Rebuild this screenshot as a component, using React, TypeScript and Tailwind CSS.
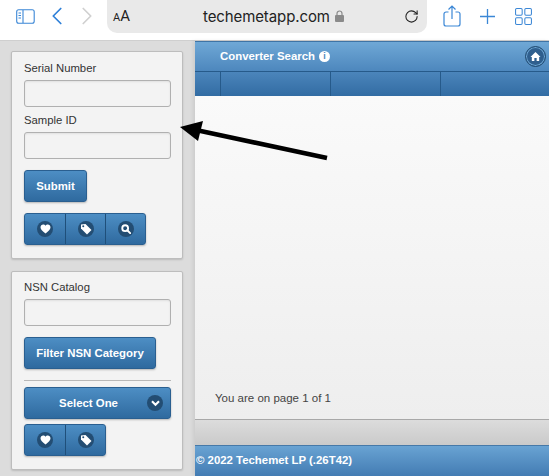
import { ChevronLeft, ChevronRight, RotateCw } from 'lucide-react'

const FONT = "font-['Liberation_Sans',Arial,sans-serif]"
const BTN = 'bg-gradient-to-b from-[#4d8ec4] to-[#2f6a9f] border border-[#2a5f90] text-white font-bold text-[11.4px] rounded-[3px] shadow-[0_1px_2px_rgba(0,0,0,0.25)]'

function Dot({ children }: { children: React.ReactNode }) {
  return (
    <span className="w-[16px] h-[16px] rounded-full bg-[#234d73] flex items-center justify-center">
      {children}
    </span>
  )
}

function Heart() {
  return (
    <svg width="11" height="10" viewBox="0 0 24 22" fill="white">
      <path d="M12 21 C5 15 1 11.500 1 7 C1 3.500 3.700 1 7 1 C9 1 11 2 12 4 C13 2 15 1 17 1 C20.300 1 23 3.500 23 7 C23 11.500 19 15 12 21Z" />
    </svg>
  )
}

function Tag() {
  return (
    <svg width="12" height="12" viewBox="0 0 24 24" fill="white">
      <path d="M2 3 L11 2 L23 14 L14 23 L2 11Z" />
      <circle cx="6.500" cy="6.500" r="2" fill="#234d73" />
    </svg>
  )
}

function Search() {
  return (
    <svg width="10" height="10" viewBox="0 0 24 24" fill="none" stroke="white" strokeWidth="4.500">
      <circle cx="10" cy="10" r="7" />
      <path d="M15 15 L22 22" strokeLinecap="round" />
    </svg>
  )
}

function IconGroup({ icons }: { icons: React.ReactNode[] }) {
  return (
    <div className={`${BTN} flex h-[32px] w-fit overflow-hidden`}>
      {icons.map((icon, i) => (
        <div
          key={i}
          className={`w-[40px] flex items-center justify-center ${i > 0 ? 'border-l border-[#1f4f7a]' : ''}`}
        >
          <Dot>{icon}</Dot>
        </div>
      ))}
    </div>
  )
}

function Field({ label }: { label: string }) {
  return (
    <div>
      <div className="text-[11.3px] leading-[15px] text-[#333] h-[19px]">{label}</div>
      <div className="h-[27px] bg-[#f3f3f3] border border-[#b0b0b0] rounded-[3px] shadow-[inset_0_1px_2px_rgba(0,0,0,0.08)]" />
    </div>
  )
}

export default function App() {
  return (
    <div className={`${FONT} relative w-[549px] h-[476px] overflow-hidden bg-[#dcdcdc] flex flex-col`}>
      {/* Safari toolbar */}
      <div className="h-[41px] pb-[8px] bg-white border-b border-[#cfcfcf] flex items-center shrink-0">
        <svg className="ml-4" width="19" height="15" viewBox="0 0 19 15" fill="none" stroke="#3b87d6" strokeWidth="1.100">
          <rect x="0.700" y="0.700" width="17.500" height="13.500" rx="2" />
          <path d="M7 1 V14" />
          <path d="M2.500 4 H5 M2.500 6.500 H5 M2.500 9 H5" strokeWidth="1" />
        </svg>
        <ChevronLeft size={30} strokeWidth={1.400} className="text-[#2f80d8] ml-[7px]" />
        <ChevronRight size={30} strokeWidth={1.400} className="text-[#d0d0d0]" />
        <div className="ml-[5px] w-[320px] h-[33px] rounded-b-[10px] bg-[#e9e9e9] flex items-center">
          <span className="ml-[6px] text-[#222] font-['Roboto',sans-serif]">
            <span className="text-[11px]">A</span>
            <span className="text-[15px]">A</span>
          </span>
          <span className="ml-[73px] text-[15px] text-[#222] font-['Inter',sans-serif] leading-none tracking-[-0.1px]">techemetapp.com</span>
          <svg className="ml-[5px]" width="9" height="12" viewBox="0 0 9 12">
            <path d="M2 5 V3.500 A2.500 2.500 0 0 1 7 3.500 V5" fill="none" stroke="#8a8a8a" strokeWidth="1.200" />
            <rect x="0" y="5" width="9" height="7" rx="1" fill="#8a8a8a" />
          </svg>
          <RotateCw size={15} strokeWidth={1.700} className="ml-auto mr-[8px] text-[#222]" />
        </div>
        <svg className="ml-[16px]" width="18" height="22" viewBox="0 0 18 22" fill="none" stroke="#3b87d6" strokeWidth="1.200">
          <path d="M5.500 7 H3 A2 2 0 0 0 1 9 V19 A2 2 0 0 0 3 21 H15 A2 2 0 0 0 17 19 V9 A2 2 0 0 0 15 7 H12.500" />
          <path d="M9 14 V1.500 M5.500 4.500 L9 1 L12.500 4.500" />
        </svg>
        <svg className="ml-[19px]" width="15" height="15" viewBox="0 0 15 15" stroke="#3b87d6" strokeWidth="1.300">
          <path d="M7.500 0 V15 M0 7.500 H15" />
        </svg>
        <svg className="ml-[20px]" width="17" height="17" viewBox="0 0 18 18" fill="none" stroke="#3b87d6" strokeWidth="1.100">
          <rect x="0.600" y="0.600" width="7" height="7" rx="1.200" />
          <rect x="10.400" y="0.600" width="7" height="7" rx="1.200" />
          <rect x="0.600" y="10.400" width="7" height="7" rx="1.200" />
          <rect x="10.400" y="10.400" width="7" height="7" rx="1.200" />
        </svg>
      </div>

      <div className="flex flex-1 min-h-0">
        {/* Sidebar */}
        <div className="w-[195px] shrink-0 bg-[#dcdcdc] pl-[11px] pr-[12px] pt-[10px] flex flex-col gap-3">
          <div className="h-[208px] bg-[#f3f3f3] border border-[#bdbdbd] rounded-[2px] shadow-[0_1px_2px_rgba(0,0,0,0.15)] pt-[9px] pl-3 pr-[11px]">
            <Field label="Serial Number" />
            <div className="mt-[6px]">
              <Field label="Sample ID" />
            </div>
            <button className={`${BTN} mt-[11px] w-[63px] h-[32px] pt-[2px] block`}>Submit</button>
            <div className="mt-[11px]">
              <IconGroup icons={[<Heart />, <Tag />, <Search />]} />
            </div>
          </div>
          <div className="h-[199px] bg-[#f3f3f3] border border-[#bdbdbd] rounded-[2px] shadow-[0_1px_2px_rgba(0,0,0,0.15)] pt-[8px] pl-3 pr-[11px]">
            <Field label="NSN Catalog" />
            <button className={`${BTN} mt-[11px] w-[132px] h-[32px] pt-[2px] block`}>Filter NSN Category</button>
            <div className="mt-[11px] border-t border-[#b8b8b8]" />
            <div className={`${BTN} mt-[6px] h-[32px] relative flex items-center justify-center pr-[18px] pt-[2px]`}>
              Select One
              <span className="absolute right-[7px] top-[7px]">
                <Dot>
                  <svg width="9" height="7" viewBox="0 0 10 8" fill="none" stroke="white" strokeWidth="2.400">
                    <path d="M1 1.500 L5 5.500 L9 1.500" />
                  </svg>
                </Dot>
              </span>
            </div>
            <div className="mt-[5px]">
              <IconGroup icons={[<Heart />, <Tag />]} />
            </div>
          </div>
        </div>

        {/* Main */}
        <div className="flex-1 flex flex-col min-w-0 shadow-[-2px_0_4px_rgba(0,0,0,0.08)]">
          <div className="h-[30px] bg-gradient-to-b from-[#6fa8d6] to-[#4d87bd] border-t border-[#3f74a5] flex items-center relative shrink-0">
            <span className="ml-[25px] text-white font-bold text-[11.4px] flex items-center gap-[4px]">
              Converter Search
              <span className="w-[11px] h-[11px] rounded-full bg-white text-[#4d87bd] text-[9px] leading-[11px] text-center font-bold">i</span>
            </span>
            <span className="ml-auto mr-[3px] w-[21px] h-[21px] rounded-full bg-[#2f5f8e] border border-[#234d73] shadow-[inset_0_0_0_1px_#6fa8d6] flex items-center justify-center">
              <svg width="11" height="11" viewBox="0 0 24 24" fill="white">
                <path d="M12 2 L23 13 H20 V22 H14.500 V15 H9.500 V22 H4 V13 H1Z" />
              </svg>
            </span>
          </div>
          <div className="h-[25px] bg-gradient-to-b from-[#4b85bb] to-[#326ca3] border-t border-[#265a8a] flex shrink-0">
            <div className="w-[26px] border-r border-[#265a8a]" />
            <div className="w-[110px] border-r border-[#265a8a]" />
            <div className="w-[110px] border-r border-[#265a8a]" />
            <div className="flex-1" />
          </div>
          <div className="flex-1 bg-gradient-to-b from-[#fafafa] to-[#eeeeee] border-b border-[#a8a8a8] flex flex-col justify-end">
            <div className="ml-[20px] mb-[13px] text-[11.5px] leading-[16px] text-[#444]">You are on page 1 of 1</div>
          </div>
          <div className="h-[25px] bg-gradient-to-b from-[#dcdcdc] to-[#cacaca] shrink-0" />
          <div className="h-[31px] bg-gradient-to-b from-[#69a3d3] to-[#437cb3] border-t border-[#4679a8] flex items-center shrink-0">
            <span className="ml-[1px] text-white font-bold text-[11.4px]">© 2022 Techemet LP (.26T42)</span>
          </div>
        </div>
      </div>

      {/* Arrow drawn over the screenshot */}
      <svg className="absolute left-0 top-0 pointer-events-none" width="549" height="476" viewBox="0 0 549 476">
        <path d="M196 130 L327 158" stroke="black" strokeWidth="4.500" />
        <path d="M180 127 L203 121 L198 141Z" fill="black" />
      </svg>
    </div>
  )
}
